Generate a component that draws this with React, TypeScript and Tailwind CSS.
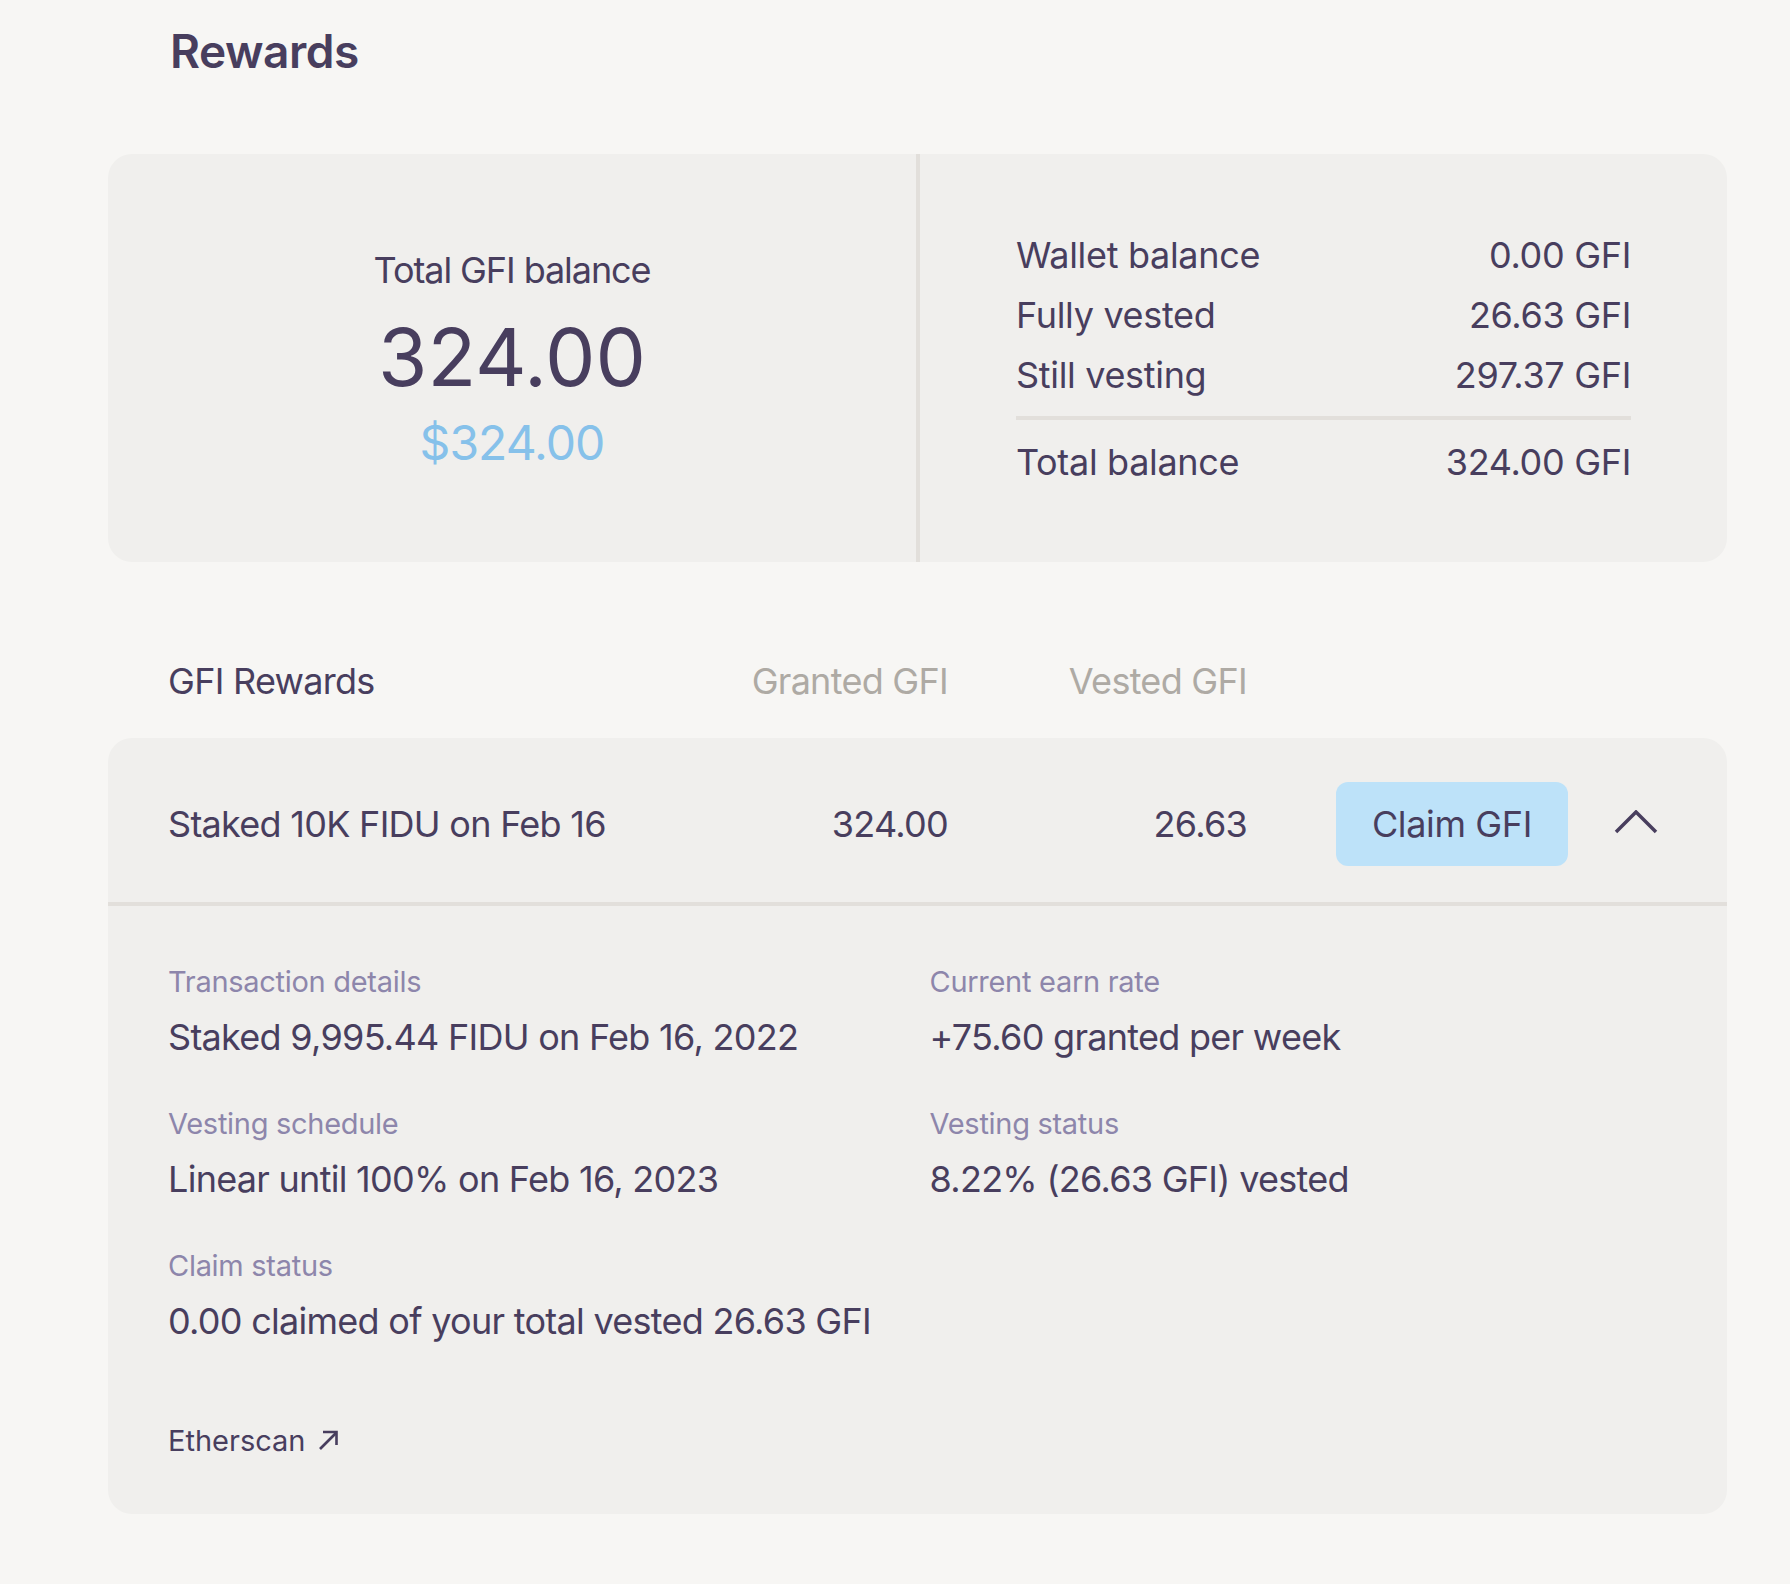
const balances = [
  { label: "Wallet balance", value: "0.00 GFI" },
  { label: "Fully vested", value: "26.63 GFI" },
  { label: "Still vesting", value: "297.37 GFI" },
];

const details = [
  { label: "Transaction details", value: "Staked 9,995.44 FIDU on Feb 16, 2022" },
  { label: "Current earn rate", value: "+75.60 granted per week" },
  { label: "Vesting schedule", value: "Linear until 100% on Feb 16, 2023" },
  { label: "Vesting status", value: "8.22% (26.63 GFI) vested" },
  { label: "Claim status", value: "0.00 claimed of your total vested 26.63 GFI" },
];

export default function App() {
  return (
    <div className="min-h-screen bg-[#f7f6f4] font-['Inter',sans-serif] text-[#483e5e]">
      <div className="ml-[108px] w-[1619px] pt-[27px] pb-[71px]">
        <h1 className="pl-[62px] text-[46px] leading-[48px] font-semibold tracking-[-0.01em]">
          Rewards
        </h1>

        {/* Total balance card */}
        <div className="mt-[79px] flex h-[408px] rounded-[24px] bg-[#f0efed]">
          <div className="flex w-[812px] flex-col items-center justify-center border-r-4 border-[#e2dfdb] pb-[4px]">
            <p className="text-[36px] leading-[48px] tracking-[-0.03em]">Total GFI balance</p>
            <p className="mt-[23px] text-[80px] leading-[80px]">324.00</p>
            <p className="mt-[22px] text-[48px] leading-[48px] tracking-[-0.02em] text-[#86c1ea]">$324.00</p>
          </div>
          <div className="flex flex-1 flex-col justify-center px-[96px] tracking-[-0.02em]">
            {balances.map((row) => (
              <div key={row.label} className="flex justify-between text-[36px] leading-[60px]">
                <span>{row.label}</span>
                <span>{row.value}</span>
              </div>
            ))}
            <div className="mt-[11px] mb-[12px] h-[4px] bg-[#e2dfdb]" />
            <div className="flex justify-between text-[36px] leading-[60px]">
              <span>Total balance</span>
              <span>324.00 GFI</span>
            </div>
          </div>
        </div>

        {/* Rewards table */}
        <div className="mt-[95px] flex whitespace-nowrap pl-[60px] text-[36px] leading-[48px] tracking-[-0.02em]">
          <span className="w-[580px]">GFI Rewards</span>
          <span className="w-[200px] text-right text-[#aeaaa4]">Granted GFI</span>
          <span className="w-[299px] text-right text-[#aeaaa4]">Vested GFI</span>
        </div>

        <div className="mt-[33px] rounded-[24px] bg-[#f0efed]">
          <div className="flex h-[168px] items-center whitespace-nowrap border-b-4 border-[#e2dfdb] pt-[8px] pl-[60px] text-[36px] leading-[48px] tracking-[-0.02em]">
            <span className="w-[580px]">Staked 10K FIDU on Feb 16</span>
            <span className="w-[200px] text-right">324.00</span>
            <span className="w-[299px] text-right">26.63</span>
            <button className="ml-[89px] h-[84px] w-[232px] rounded-[12px] bg-[#bde2f9] text-[36px] leading-[48px] tracking-[-0.01em]">
              Claim GFI
            </button>
            <svg className="ml-[46px] -mt-[4px]" width="44" height="24" viewBox="0 0 44 24" fill="none">
              <path d="M2 22 L22 2 L42 22" stroke="#483e5e" strokeWidth="3.5" />
            </svg>
          </div>

          <div className="px-[60px] pt-[56px] pb-[53px]">
            <div className="grid grid-cols-2 gap-x-[24px] gap-y-[43px]">
              {details.map((d) => (
                <div key={d.label}>
                  <p className="text-[29px] leading-[40px] tracking-[-0.01em] text-[#8d86ab]">{d.label}</p>
                  <p className="mt-[11px] text-[36px] leading-[48px] tracking-[-0.02em]">{d.value}</p>
                </div>
              ))}
            </div>
            <a className="mt-[76px] flex items-center gap-[12px] text-[29px] leading-[40px]">
              Etherscan
              <svg className="-mt-[3px]" width="22" height="22" viewBox="0 0 22 22" fill="none" stroke="#483e5e" strokeWidth="2.6">
                <path d="M3 20 L19 4" />
                <path d="M6 3 H19.5 V16" />
              </svg>
            </a>
          </div>
        </div>
      </div>
    </div>
  );
}
